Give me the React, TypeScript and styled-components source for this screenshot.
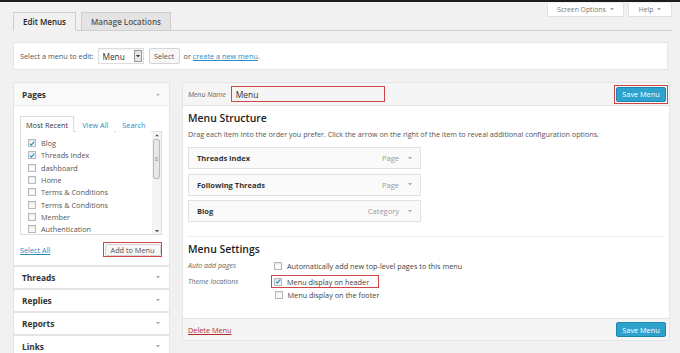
import styled, { createGlobalStyle } from 'styled-components';

const GlobalStyle = createGlobalStyle`
  html, body {
    margin: 0;
    padding: 0;
    background: #f1f1f1;
  }
  body {
    font-family: "Open Sans", "Liberation Sans", sans-serif;
    color: #444;
  }
  * { box-sizing: border-box; }
`;

const Page = styled.div`
  width: 680px;
  height: 353px;
  overflow: hidden;
  border-top: 2px solid #1d1d1d;
  padding: 0 8px 0 13px;
`;

const TopBar = styled.div`
  display: flex;
  align-items: flex-end;
  height: 29px;
  border-bottom: 1px solid #cfcfcf;
`;

const Tab = styled.div<{ $active?: boolean }>`
  height: 19px;
  margin-right: 5px;
  margin-bottom: -1px;
  padding: 0 9px;
  display: flex;
  align-items: center;
  font-size: 8px;
  font-weight: 600;
  color: ${p => (p.$active ? '#222' : '#555')};
  background: ${p => (p.$active ? '#f1f1f1' : '#e4e4e4')};
  border: 1px solid #cfcfcf;
  border-bottom-color: ${p => (p.$active ? '#f1f1f1' : '#cfcfcf')};
`;

const ScreenMeta = styled.div`
  margin-left: auto;
  align-self: flex-start;
  display: flex;
  gap: 4px;
  margin-top: 1px;
`;

const MetaButton = styled.div<{ $w: number }>`
  width: ${p => p.$w}px;
  height: 14px;
  background: #fff;
  border: 1px solid #e1e1e1;
  border-top: none;
  font-size: 6.8px;
  color: #777;
  display: flex;
  align-items: center;
  justify-content: center;
  gap: 4px;
`;

const SelectBar = styled.div`
  margin: 11px 4px 0 0;
  height: 28px;
  background: #fff;
  border: 1px solid #e6e6e6;
  display: flex;
  align-items: center;
  padding: 0 6px;
  font-size: 7.3px;
  color: #555;
`;

const Dropdown = styled.div`
  width: 46px;
  height: 16px;
  margin-left: 4px;
  border: 1px solid #ddd;
  display: flex;
  align-items: center;
  justify-content: space-between;
  padding: 0 1px 0 4px;
  font-size: 8.3px;
  color: #333;
  box-shadow: inset 0 1px 2px rgba(0, 0, 0, 0.06);
`;

const DropArrow = styled.span`
  width: 8px;
  height: 12px;
  border: 1px solid #999;
  background: #e6e6e6;
  display: flex;
  align-items: center;
  justify-content: center;
`;

const GrayButton = styled.div<{ $w: number; $h?: number }>`
  width: ${p => p.$w}px;
  height: ${p => p.$h ?? 16}px;
  background: #f7f7f7;
  border: 1px solid #d4d4d4;
  border-radius: 2px;
  font-size: 7.3px;
  color: #555;
  display: flex;
  align-items: center;
  justify-content: center;
`;

const Link = styled.span<{ $danger?: boolean }>`
  color: ${p => (p.$danger ? '#b32d2e' : '#2c8ac4')};
  text-decoration: underline;
`;

const Columns = styled.div`
  display: flex;
  gap: 12px;
  margin-top: 12px;
  align-items: flex-start;
`;

const LeftCol = styled.div`
  width: 157px;
  flex: none;
  display: flex;
  flex-direction: column;
`;

const Box = styled.div`
  background: #fff;
  border: 1px solid #e5e5e5;
`;

const BoxHeader = styled.div<{ $h?: number; $bg?: string }>`
  height: ${p => p.$h ?? 22}px;
  padding: 0 9px 0 8px;
  display: flex;
  align-items: center;
  justify-content: space-between;
  font-size: 8.3px;
  font-weight: 700;
  color: #333;
  background: ${p => p.$bg ?? '#fff'};
`;

const PagesBody = styled.div`
  border-top: 1px solid #eee;
  padding: 9px 7px 8px 6px;
`;

const SubTabs = styled.div`
  display: flex;
  align-items: flex-end;
  height: 16px;
  font-size: 7.3px;
`;

const SubTab = styled.div<{ $active?: boolean }>`
  height: 16px;
  padding: 0 5px;
  margin-right: 2px;
  display: flex;
  align-items: center;
  color: ${p => (p.$active ? '#333' : '#2c8ac4')};
  border: 1px solid ${p => (p.$active ? '#ddd' : 'transparent')};
  border-bottom: none;
  background: #fff;
  margin-bottom: -1px;
  position: relative;
`;

const ListBox = styled.div`
  height: 104px;
  border: 1px solid #ddd;
  display: flex;
`;

const ListItems = styled.div`
  flex: 1;
  padding: 5px 0 0 7px;
`;

const ListRow = styled.div`
  height: 12.3px;
  display: flex;
  align-items: center;
  gap: 5px;
  font-size: 7.3px;
  color: #555;
`;

const Scrollbar = styled.div`
  width: 9px;
  display: flex;
  flex-direction: column;
  align-items: center;
  padding: 2px 0;
  background: #f4f4f4;
`;

const Thumb = styled.div`
  width: 7px;
  height: 40px;
  margin-top: 3px;
  border: 1px solid #bbb;
  border-radius: 2px;
  background: #e8e8e8;
  display: flex;
  align-items: center;
  justify-content: center;
`;

const PagesFooter = styled.div`
  margin-top: 7px;
  display: flex;
  align-items: center;
  justify-content: space-between;
  font-size: 7.3px;
`;

const Highlight = styled.div<{ $pad?: number }>`
  border: 1.5px solid #cf4646;
  padding: ${p => p.$pad ?? 1}px;
  display: flex;
  align-items: center;
`;

const RightCol = styled.div`
  flex: 1;
  margin-right: 2px;
  background: #fff;
  border: 1px solid #e5e5e5;
`;

const MenuHeader = styled.div`
  height: 23px;
  background: #f5f5f5;
  border-bottom: 1px solid #e3e3e3;
  display: flex;
  align-items: center;
  padding: 0 1px 0 5px;
`;

const ItalicLabel = styled.span<{ $w?: number }>`
  width: ${p => (p.$w ? `${p.$w}px` : 'auto')};
  flex: none;
  font-size: 7px;
  font-style: italic;
  color: #666;
`;

const NameInput = styled.div`
  width: 154px;
  height: 16px;
  margin-left: 5px;
  border: 1.5px solid #cf4646;
  padding: 0 4px;
  display: flex;
  align-items: center;
  font-size: 8.5px;
  color: #333;
`;

const BlueButton = styled.div<{ $w: number }>`
  width: ${p => p.$w}px;
  height: 15px;
  background: #2ea2cc;
  border: 1px solid #1b86b3;
  border-radius: 2px;
  color: #fff;
  font-size: 7.3px;
  display: flex;
  align-items: center;
  justify-content: center;
`;

const MenuBody = styled.div`
  padding: 5px 5px 17px 5px;
`;

const SectionTitle = styled.div`
  height: 14px;
  line-height: 14px;
  font-size: 10.4px;
  font-weight: 600;
  color: #222;
`;

const Description = styled.div`
  margin-top: 4px;
  font-size: 7.2px;
  color: #555;
  line-height: 10px;
`;

const MenuItems = styled.div`
  margin-top: 8px;
  display: flex;
  flex-direction: column;
  gap: 4.5px;
`;

const MenuItem = styled.div`
  width: 233px;
  height: 22px;
  background: #fafafa;
  border: 1px solid #e1e1e1;
  display: flex;
  align-items: center;
  padding: 0 8px;
  font-size: 7.5px;
  font-weight: 700;
  color: #333;
`;

const ItemType = styled.span`
  margin-left: auto;
  font-weight: 400;
  color: #999;
  display: flex;
  align-items: center;
  gap: 9px;
`;

const Divider = styled.div`
  margin-top: 14px;
  border-top: 1px solid #eee;
  padding-top: 5px;
`;

const SettingsRows = styled.div`
  margin-top: 3px;
  display: flex;
  flex-direction: column;
`;

const SettingRow = styled.div`
  display: flex;
  align-items: flex-start;
`;

const SettingLabel = styled(ItalicLabel)`
  height: 13px;
  line-height: 13px;
`;

const Options = styled.div`
  display: flex;
  flex-direction: column;
`;

const Option = styled.div<{ $h?: number }>`
  height: ${p => p.$h ?? 13}px;
  display: flex;
  align-items: center;
  gap: 5px;
  font-size: 7.3px;
  color: #444;
`;

const MenuFooter = styled.div`
  height: 22px;
  background: #f5f5f5;
  border-top: 1px solid #e3e3e3;
  display: flex;
  align-items: center;
  justify-content: space-between;
  padding: 0 3px 0 5px;
  font-size: 7.3px;
`;

const CheckBoxEl = styled.span`
  width: 8px;
  height: 8px;
  flex: none;
  border: 1px solid #b4b9be;
  background: #fbfbfb;
  box-shadow: inset 0 1px 2px rgba(0, 0, 0, 0.1);
  display: flex;
  align-items: center;
  justify-content: center;
`;

const Caret = ({ up, color = '#aaa', size = 5 }: { up?: boolean; color?: string; size?: number }) => (
  <svg width={size} height={size * 0.6} viewBox="0 0 10 6" style={{ transform: up ? 'rotate(180deg)' : undefined }}>
    <path d="M0 0 L10 0 L5 6 Z" fill={color} />
  </svg>
);

const CheckBox = ({ checked }: { checked?: boolean }) => (
  <CheckBoxEl>
    {checked && (
      <svg width="7" height="7" viewBox="0 0 10 10">
        <path d="M1.5 5.2 L4 7.8 L8.8 1.8" stroke="#1e8cbe" strokeWidth="1.8" fill="none" />
      </svg>
    )}
  </CheckBoxEl>
);

const pages = [
  { label: 'Blog', checked: true },
  { label: 'Threads Index', checked: true },
  { label: 'dashboard' },
  { label: 'Home' },
  { label: 'Terms & Conditions' },
  { label: 'Terms & Conditions' },
  { label: 'Member' },
  { label: 'Authentication' },
];

const menuItems = [
  { title: 'Threads Index', type: 'Page' },
  { title: 'Following Threads', type: 'Page' },
  { title: 'Blog', type: 'Category' },
];

const sections = ['Threads', 'Replies', 'Reports', 'Links'];

export default function App() {
  return (
    <>
      <GlobalStyle />
      <Page>
        <TopBar>
          <Tab $active>Edit Menus</Tab>
          <Tab>Manage Locations</Tab>
          <ScreenMeta>
            <MetaButton $w={77}>
              Screen Options <Caret size={4} />
            </MetaButton>
            <MetaButton $w={44}>
              Help <Caret size={4} />
            </MetaButton>
          </ScreenMeta>
        </TopBar>

        <SelectBar>
          Select a menu to edit:
          <Dropdown>
            Menu
            <DropArrow>
              <Caret color="#333" size={4} />
            </DropArrow>
          </Dropdown>
          <span style={{ width: 5 }} />
          <GrayButton $w={31}>Select</GrayButton>
          <span style={{ marginLeft: 4 }}>
            or <Link>create a new menu</Link>.
          </span>
        </SelectBar>

        <Columns>
          <LeftCol>
            <Box>
              <BoxHeader $bg="#f9f9f9">
                Pages <Caret up size={4} />
              </BoxHeader>
              <PagesBody>
                <SubTabs>
                  <SubTab $active>Most Recent</SubTab>
                  <SubTab>View All</SubTab>
                  <SubTab>Search</SubTab>
                </SubTabs>
                <ListBox>
                  <ListItems>
                    {pages.map((p, i) => (
                      <ListRow key={i}>
                        <CheckBox checked={p.checked} />
                        {p.label}
                      </ListRow>
                    ))}
                  </ListItems>
                  <Scrollbar>
                    <Caret up color="#555" size={4} />
                    <Thumb>
                      <svg width="3" height="4" viewBox="0 0 3 4">
                        <path d="M0 0.5H3M0 2H3M0 3.5H3" stroke="#999" strokeWidth="0.7" />
                      </svg>
                    </Thumb>
                    <span style={{ flex: 1 }} />
                    <Caret color="#555" size={4} />
                  </Scrollbar>
                </ListBox>
                <PagesFooter>
                  <Link>Select All</Link>
                  <Highlight $pad={0.5}>
                    <GrayButton $w={56} $h={12}>Add to Menu</GrayButton>
                  </Highlight>
                </PagesFooter>
              </PagesBody>
            </Box>
            {sections.map(s => (
              <Box key={s}>
                <BoxHeader $h={21}>
                  {s} <Caret size={4} />
                </BoxHeader>
              </Box>
            ))}
          </LeftCol>

          <RightCol>
            <MenuHeader>
              <ItalicLabel>Menu Name</ItalicLabel>
              <NameInput>Menu</NameInput>
              <span style={{ flex: 1 }} />
              <Highlight>
                <BlueButton $w={50}>Save Menu</BlueButton>
              </Highlight>
            </MenuHeader>
            <MenuBody>
              <SectionTitle>Menu Structure</SectionTitle>
              <Description>
                Drag each item into the order you prefer. Click the arrow on the right of the item to reveal additional
                configuration options.
              </Description>
              <MenuItems>
                {menuItems.map(m => (
                  <MenuItem key={m.title}>
                    {m.title}
                    <ItemType>
                      {m.type} <Caret size={4} />
                    </ItemType>
                  </MenuItem>
                ))}
              </MenuItems>
              <Divider>
                <SectionTitle>Menu Settings</SectionTitle>
                <SettingsRows>
                  <SettingRow>
                    <SettingLabel $w={86}>Auto add pages</SettingLabel>
                    <Options>
                      <Option>
                        <CheckBox />
                        Automatically add new top-level pages to this menu
                      </Option>
                    </Options>
                  </SettingRow>
                  <SettingRow style={{ marginTop: 3 }}>
                    <SettingLabel $w={83}>Theme locations</SettingLabel>
                    <Options>
                      <Highlight $pad={0}>
                        <Option $h={11} style={{ padding: '0 3px 0 2px' }}>
                          <CheckBox checked />
                          Menu display on header
                        </Option>
                      </Highlight>
                      <Option style={{ paddingLeft: 3.5 }}>
                        <CheckBox />
                        Menu display on the footer
                      </Option>
                    </Options>
                  </SettingRow>
                </SettingsRows>
              </Divider>
            </MenuBody>
            <MenuFooter>
              <Link $danger>Delete Menu</Link>
              <BlueButton $w={50}>Save Menu</BlueButton>
            </MenuFooter>
          </RightCol>
        </Columns>
      </Page>
    </>
  );
}
